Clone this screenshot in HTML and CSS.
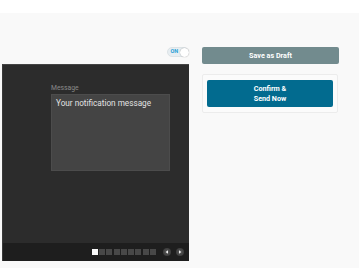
FILE: index.html
```html
<!DOCTYPE html>
<html>
<head>
<meta charset="utf-8">
<link rel="stylesheet" href="styles.css">
</head>
<body>
<div class="page">
  <div class="left">
    <div class="toggle-row">
      <div class="toggle"><span class="on">ON</span><span class="knob"></span></div>
    </div>
    <div class="panel">
      <div class="panel-body">
        <div class="label">Message</div>
        <div class="message">Your notification message</div>
      </div>
      <div class="panel-foot">
        <div class="dots">
          <span class="dot active"></span><span class="dot"></span><span class="dot"></span><span class="dot"></span><span class="dot"></span><span class="dot"></span><span class="dot"></span><span class="dot"></span><span class="dot"></span>
        </div>
        <div class="arrows">
          <span class="arrow"><svg width="8" height="8" viewBox="0 0 8 8"><path d="M5 2.3 L2.6 4 L5 5.7 Z" fill="#eee"/></svg></span>
          <span class="arrow"><svg width="8" height="8" viewBox="0 0 8 8"><path d="M3 2.3 L5.4 4 L3 5.7 Z" fill="#eee"/></svg></span>
        </div>
      </div>
    </div>
  </div>
  <div class="right">
    <button class="draft">Save as Draft</button>
    <div class="card">
      <button class="send">Confirm &amp;<br>Send Now</button>
    </div>
  </div>
</div>
</body>
</html>
```
FILE: styles.css
```css
html, body { margin: 0; padding: 0; background: #fff; }
body { font-family: Roboto, "Liberation Sans", sans-serif; }
.page {
  margin-top: 13px;
  background: #f9f9f9;
  height: 255px;
  display: flex;
  align-items: flex-start;
}
.left {
  width: 187px;
  margin-left: 2px;
  padding-top: 34px;
}
.toggle-row {
  display: flex;
  justify-content: flex-end;
  height: 17px;
}
.toggle {
  width: 22px;
  height: 10px;
  box-sizing: border-box;
  border-radius: 5px;
  background: #e7eef2;
  border: 1px solid #dde3e6;
  display: flex;
  align-items: center;
  justify-content: space-between;
  padding-left: 2.5px;
}
.on {
  font-size: 5.5px;
  font-weight: 700;
  color: #2a9fd6;
  line-height: 1;
}
.knob {
  width: 9px;
  height: 9px;
  border-radius: 50%;
  background: #fff;
  box-shadow: 0 0 1px rgba(0,0,0,0.45);
  margin-right: -1px;
}
.panel {
  background: #2c2c2c;
  border-top: 1px solid #454545;
  border-left: 1px solid #3a3a3a;
}
.panel-body {
  height: 178px;
  box-sizing: border-box;
  padding: 19px 0 0 48px;
}
.label {
  font-size: 6.8px;
  color: #8a8a8a;
  line-height: 9px;
  height: 10px;
}
.message {
  width: 119px;
  height: 77px;
  box-sizing: border-box;
  background: #444;
  border: 1px solid #4c4c4c;
  color: #e2e2e2;
  font-size: 8.2px;
  padding: 3px 0 0 4px;
  line-height: 11px;
}
.panel-foot {
  height: 18px;
  background: #1e1e1e;
  display: flex;
  align-items: center;
  justify-content: flex-end;
  padding-right: 5px;
}
.dots { display: flex; gap: 1.3px; margin-right: 7px; }
.dot { width: 6px; height: 6px; background: #484848; }
.dot.active { background: #fafafa; }
.arrows { display: flex; gap: 5px; }
.arrow {
  width: 8px;
  height: 8px;
  border-radius: 50%;
  background: radial-gradient(circle, #5a5a5a 0%, #3c3c3c 70%, #2e2e2e 100%);
  display: flex;
}
.right {
  margin-left: 13px;
  width: 137px;
  padding-top: 34px;
}
button {
  font-family: Roboto, "Liberation Sans", sans-serif;
  border: none;
  color: #fff;
  font-weight: 700;
  font-size: 7.2px;
  cursor: pointer;
}
.draft {
  display: block;
  width: 137px;
  height: 17px;
  border-radius: 2px;
  background: #728b8e;
  padding: 0;
}
.card {
  margin-top: 10px;
  width: 136px;
  height: 39px;
  box-sizing: border-box;
  background: #fbfbfb;
  border: 1px solid #ececec;
  border-radius: 2px;
  padding: 5px 4px 5px 4px;
}
.send {
  display: block;
  width: 126px;
  height: 27px;
  border-radius: 2px;
  background: #026b8f;
  line-height: 10px;
  padding: 0;
}
```
